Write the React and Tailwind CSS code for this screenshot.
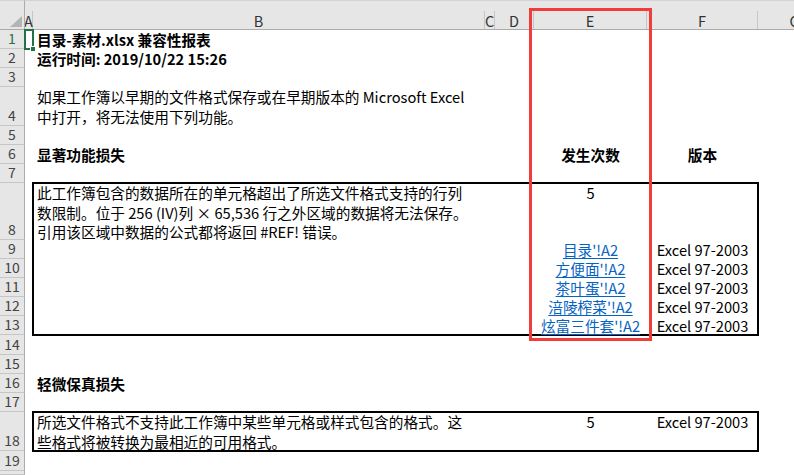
import React from "react";

const rowHeaders = [
  { n: 1, cls: "row-start-2 bg-[#d2d2d2] text-[#217346]" },
  { n: 2, cls: "row-start-3" },
  { n: 3, cls: "row-start-4" },
  { n: 4, cls: "row-start-5" },
  { n: 5, cls: "row-start-6" },
  { n: 6, cls: "row-start-7" },
  { n: 7, cls: "row-start-8" },
  { n: 8, cls: "row-start-9" },
  { n: 9, cls: "row-start-10" },
  { n: 10, cls: "row-start-11" },
  { n: 11, cls: "row-start-12" },
  { n: 12, cls: "row-start-13" },
  { n: 13, cls: "row-start-14" },
  { n: 14, cls: "row-start-15" },
  { n: 15, cls: "row-start-16" },
  { n: 16, cls: "row-start-17" },
  { n: 17, cls: "row-start-18" },
  { n: 18, cls: "row-start-19" },
  { n: 19, cls: "row-start-20" },
  { n: "", cls: "row-start-21" },
];

const links = [
  { text: "目录'!A2", cls: "row-start-10" },
  { text: "方便面'!A2", cls: "row-start-11" },
  { text: "茶叶蛋'!A2", cls: "row-start-12" },
  { text: "涪陵榨菜'!A2", cls: "row-start-13" },
  { text: "炫富三件套'!A2", cls: "row-start-14" },
];

const versions = ["row-start-10", "row-start-11", "row-start-12", "row-start-13", "row-start-14"];

// column header cell
const ColHead = ({ label, cls = "", inner = "w-full" }) => (
  <div className={`row-start-1 bg-[#e6e6e6] border-t border-[#d4d4d4] border-b border-b-[#ababab] pt-[10px] flex overflow-hidden ${cls}`}>
    <div className={`shrink-0 h-[19px] border-r border-[#c6c6c6] flex items-center justify-center text-[#333] text-[14.5px] ${inner}`}>
      {label}
    </div>
  </div>
);

export default function App() {
  return (
    <div className="relative w-[794px] h-[475px] overflow-hidden bg-white font-['Noto_Sans_CJK_SC',sans-serif] text-[14.67px] text-black">
      <div className="grid h-full grid-cols-[25px_8px_452px_10px_39px_113px_111px_1fr] grid-rows-[30px_19px_19px_19px_39px_19px_19px_19px_57px_19px_19px_19px_19px_19px_20px_19px_19px_19px_39px_20px_1fr]">
        {/* corner */}
        <div className="row-start-1 col-start-1 bg-[#e6e6e6] border-t border-[#d4d4d4] border-b border-b-[#ababab] border-r border-r-[#ababab] flex items-end justify-end pr-[2px] pb-[2px]">
          <svg width="12" height="11" viewBox="0 0 12 11">
            <polygon points="12,0 12,11 0,11" fill="#b4b4b4" />
          </svg>
        </div>
        <ColHead label="A" cls="col-start-2 bg-[#d2d2d2]" />
        <ColHead label="B" cls="col-start-3" />
        <ColHead label="C" cls="col-start-4" />
        <ColHead label="D" cls="col-start-5" />
        <ColHead label="E" cls="col-start-6" />
        <ColHead label="F" cls="col-start-7" />
        <ColHead label="G" cls="col-start-8" inner="w-[74px]" />

        {rowHeaders.map((r, i) => (
          <div
            key={i}
            className={`col-start-1 bg-[#e6e6e6] border-b border-[#c6c6c6] border-r border-r-[#ababab] flex items-end justify-center leading-[19px] text-[14px] text-[#444] ${r.cls}`}
          >
            {r.n}
          </div>
        ))}

        {/* selected A1 */}
        <div className="col-start-2 row-start-2 -m-px border-2 border-[#217346] relative">
          <div className="absolute -right-[4px] -bottom-[4px] w-[6px] h-[6px] bg-[#217346] border border-white" />
        </div>

        {/* column B text */}
        <div className="col-start-3 row-start-2 pl-[4px] flex items-end leading-[19px] font-bold whitespace-nowrap">
          目录-素材.xlsx 兼容性报表
        </div>
        <div className="col-start-3 row-start-3 pl-[4px] flex items-end leading-[19px] font-bold whitespace-nowrap">
          运行时间: 2019/10/22 15:26
        </div>
        <div className="col-start-3 row-start-5 pl-[4px] flex flex-col justify-end leading-[19.5px] whitespace-nowrap">
          <span>如果工作簿以早期的文件格式保存或在早期版本的 Microsoft Excel</span>
          <span>中打开，将无法使用下列功能。</span>
        </div>
        <div className="col-start-3 row-start-7 pl-[4px] flex items-end leading-[19px] font-bold whitespace-nowrap">
          显著功能损失
        </div>
        <div className="col-start-6 row-start-7 flex items-end justify-center leading-[19px] font-bold whitespace-nowrap">
          发生次数
        </div>
        <div className="col-start-7 row-start-7 flex items-end justify-center leading-[19px] font-bold whitespace-nowrap">
          版本
        </div>

        {/* major loss box */}
        <div className="col-start-3 col-end-8 row-start-9 row-end-15 -m-px border-2 border-black" />
        <div className="col-start-3 row-start-9 pl-[4px] flex flex-col leading-[19.5px] whitespace-nowrap">
          <span>此工作簿包含的数据所在的单元格超出了所选文件格式支持的行列</span>
          <span>数限制。位于 256 (IV)列 × 65,536 行之外区域的数据将无法保存。</span>
          <span>引用该区域中数据的公式都将返回 #REF! 错误。</span>
        </div>
        <div className="col-start-6 row-start-9 flex justify-center leading-[19.5px]">5</div>
        {links.map((l) => (
          <div key={l.text} className={`col-start-6 flex items-end justify-center leading-[19px] whitespace-nowrap ${l.cls}`}>
            <a className="text-[#0563c1] underline underline-offset-[2px] cursor-pointer">{l.text}</a>
          </div>
        ))}
        {versions.map((v) => (
          <div key={v} className={`col-start-7 flex items-end justify-center leading-[19px] whitespace-nowrap ${v}`}>
            Excel 97-2003
          </div>
        ))}

        <div className="col-start-3 row-start-17 pl-[4px] flex items-end leading-[19px] font-bold whitespace-nowrap">
          轻微保真损失
        </div>

        {/* minor loss box */}
        <div className="col-start-3 col-end-8 row-start-19 -m-px border-2 border-black" />
        <div className="col-start-3 row-start-19 pl-[4px] flex flex-col leading-[19.5px] whitespace-nowrap">
          <span>所选文件格式不支持此工作簿中某些单元格或样式包含的格式。这</span>
          <span>些格式将被转换为最相近的可用格式。</span>
        </div>
        <div className="col-start-6 row-start-19 flex justify-center leading-[19.5px]">5</div>
        <div className="col-start-7 row-start-19 flex justify-center leading-[19.5px] whitespace-nowrap">
          Excel 97-2003
        </div>
      </div>

      {/* red highlight around column E */}
      <div className="absolute left-[529px] top-[8px] w-[123px] h-[333px] border-[3px] border-[#f23c3c] pointer-events-none" />
    </div>
  );
}
